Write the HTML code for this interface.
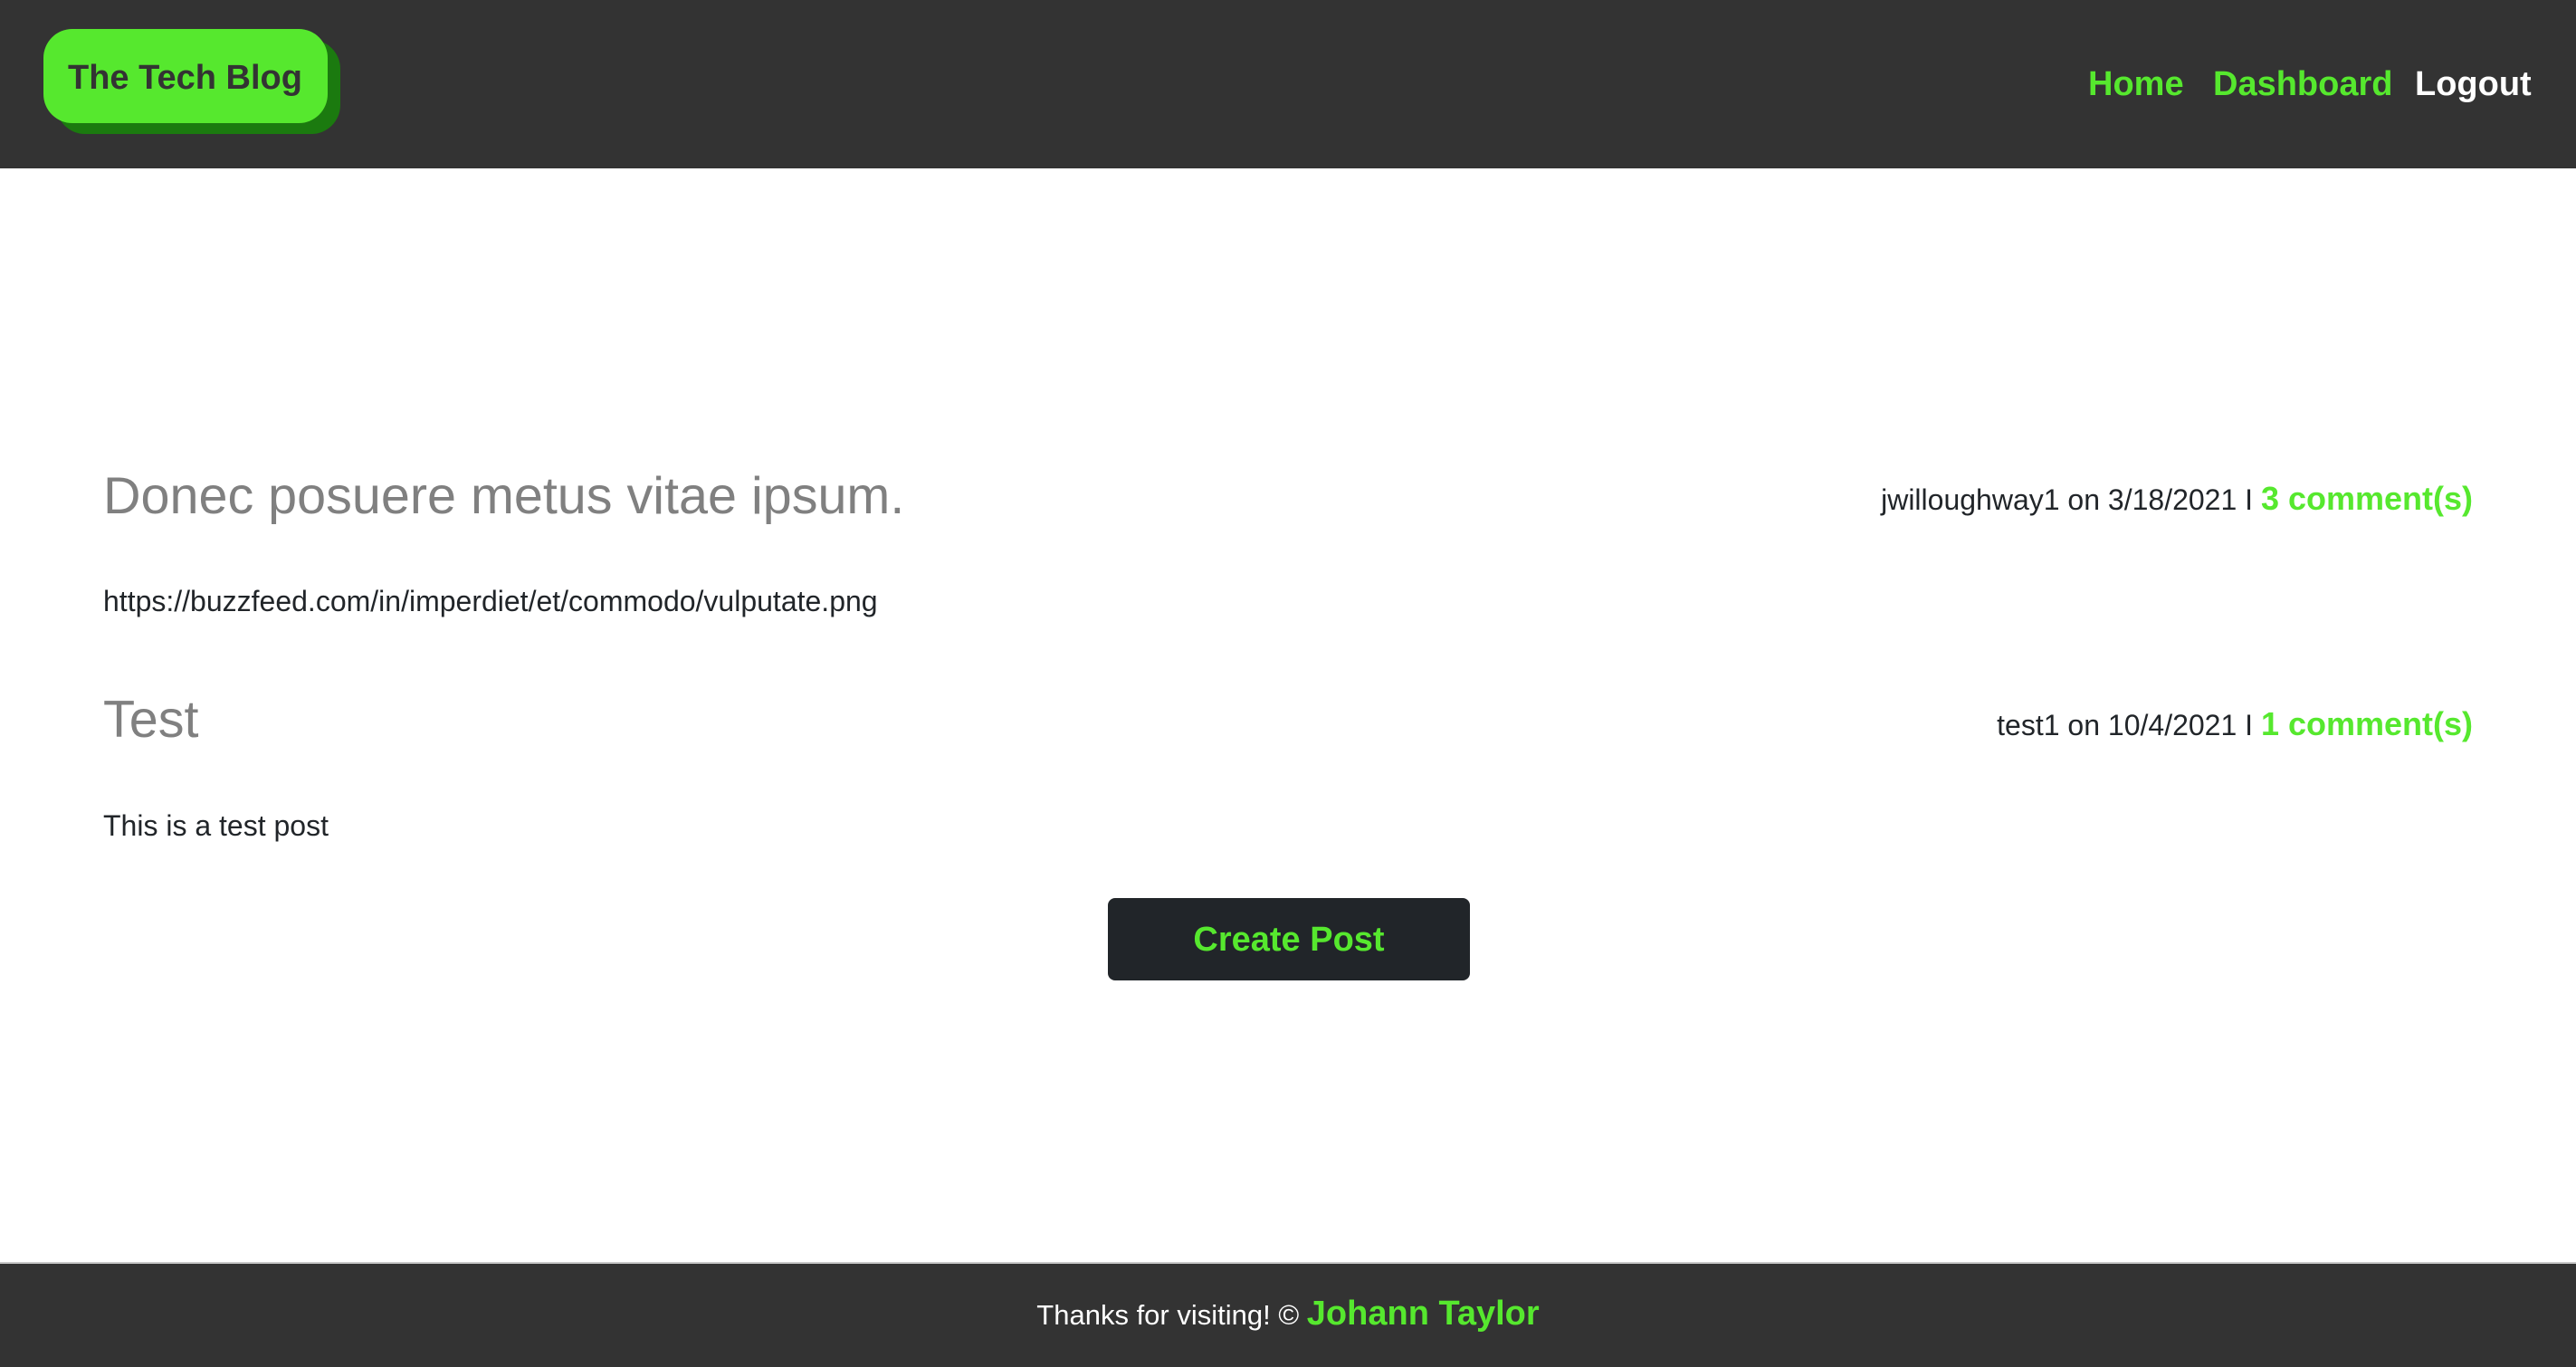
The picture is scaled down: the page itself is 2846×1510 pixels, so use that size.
<!DOCTYPE html>
<html><head><meta charset="utf-8"><style>
*{margin:0;padding:0;box-sizing:border-box}
html,body{width:2846px;height:1510px;overflow:hidden;background:#fff;font-family:"Liberation Sans",Arial,sans-serif}
.a{position:absolute;white-space:nowrap;line-height:1}
header{position:absolute;left:0;top:0;width:2846px;height:186px;background:#333}
.logo{position:absolute;left:48px;top:32px;width:314px;height:104px;background:#56e82e;border-radius:32px;box-shadow:14px 12px 0 #1b7a0f}
.g{color:#56e82e;font-weight:bold}
footer{position:absolute;left:0;top:1394px;width:2846px;height:116px;background:#333;border-top:2px solid #c8c8c8}
</style></head><body>
<header>
<div class="logo"></div>
<div class="a" style="left:75px;top:67px;font-size:38px;font-weight:bold;color:#333">The Tech Blog</div>
<div class="a g" style="left:2307px;top:74px;font-size:38px">Home</div>
<div class="a g" style="left:2445px;top:74px;font-size:38px">Dashboard</div>
<div class="a" style="left:2668px;top:74px;font-size:38px;font-weight:bold;color:#fff">Logout</div>
</header>

<div class="a" style="left:114px;top:520px;font-size:57.5px;color:#808080">Donec posuere metus vitae ipsum.</div>
<div class="a" style="right:114px;top:533px;font-size:32px;color:#212529">jwilloughway1 on 3/18/2021 I <span class="g" style="font-size:36px">3 comment(s)</span></div>
<div class="a" style="left:114px;top:648px;font-size:32px;color:#212529">https://buzzfeed.com/in/imperdiet/et/commodo/vulputate.png</div>

<div class="a" style="left:114px;top:767px;font-size:57.5px;color:#808080">Test</div>
<div class="a" style="right:114px;top:782px;font-size:32px;color:#212529">test1 on 10/4/2021 I <span class="g" style="font-size:36px">1 comment(s)</span></div>
<div class="a" style="left:114px;top:896px;font-size:32px;color:#212529">This is a test post</div>

<div style="position:absolute;left:1224px;top:992px;width:400px;height:91px;background:#212529;border-radius:8px"></div>
<div class="a g" style="left:1224px;width:400px;text-align:center;top:1019px;font-size:38px">Create Post</div>

<footer>
<div class="a" style="left:0;width:2846px;text-align:center;top:1432px;position:fixed;font-size:31px;color:#fff">Thanks for visiting! © <span class="g" style="font-size:38px">Johann Taylor</span></div>
</footer>
</body></html>
